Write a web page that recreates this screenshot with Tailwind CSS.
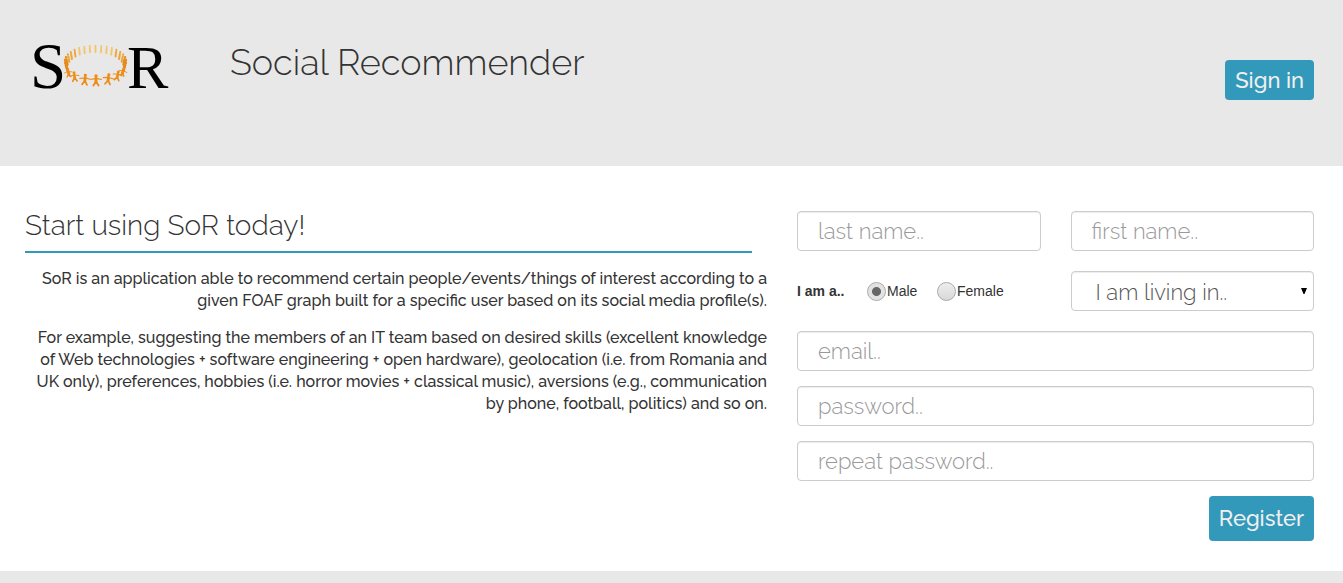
<!DOCTYPE html>
<html lang="en">
<head>
<meta charset="utf-8">
<meta name="viewport" content="width=device-width, initial-scale=1">
<title>Social Recommender</title>
<script src="https://cdn.jsdelivr.net/npm/@tailwindcss/browser@4"></script>
</head>
<body class="min-h-screen bg-[#e8e8e8] font-[Raleway,Lato,sans-serif] text-[#333]">
<header class="flex h-[166px] items-start pl-[25px] pr-[29px]">
  <a href="#" aria-label="SoR home" class="mt-5 block">
    <svg class="block h-[90px] w-[150px]" viewBox="25 20 150 90" role="img" aria-label="SoR">
      <defs>
        <g id="person" fill="currentColor" stroke="currentColor" stroke-linecap="round" stroke-linejoin="round">
          <circle cx="0" cy="-9.7" r="1.6" stroke="none"/>
          <path d="M0-7.3V-4" stroke-width="2.8"/>
          <path d="M-5.2-6.2L-1.2-7H1.2L5.2-6.2" fill="none" stroke-width="1.1"/>
          <path d="M0-4.2L-2.5-.4M0-4.2L2.5-.4" fill="none" stroke-width="1.8"/>
        </g>
        <path id="far" d="M0-6.8V-6.4M0-4.8V0" fill="none" stroke="currentColor" stroke-width="1.9" stroke-linecap="round"/>
      </defs>
      <g font-family="Liberation Serif" font-size="65" fill="#000"><text x="30" y="88">S</text><text x="127" y="88" font-size="62">R</text></g>
      <g id="ring"></g>
    </svg>
  </a>
  <h1 class="ml-[55px] mt-[38px] text-[36px] leading-[48px] font-light">Social Recommender</h1>
  <button type="button" class="ml-auto mt-[60px] h-10 rounded-[4px] bg-[#3399bb] px-[10px] text-[22px] leading-10 font-medium text-[#f0f0f0]">Sign in</button>
</header>
<main class="grid grid-cols-[742fr_517fr] gap-[30px] bg-white pt-[45px] pb-[30px] pl-[25px] pr-[29px]">
  <section>
    <h2 class="mr-[15px] h-[42px] border-b-2 border-[#3399bb] text-[28px] leading-[30px] font-light">Start using SoR today!</h2>
    <div class="mt-[15px] space-y-[15px] text-right text-[16px] leading-[22px] font-medium">
      <p>SoR is an application able to recommend certain people/events/things of interest according to a<br>given FOAF graph built for a specific user based on its social media profile(s).</p>
      <p>For example, suggesting the members of an IT team based on desired skills (excellent knowledge<br>of Web technologies + software engineering + open hardware), geolocation (i.e. from Romania and<br>UK only), preferences, hobbies (i.e. horror movies + classical music), aversions (e.g., communication<br>by phone, football, politics) and so on.</p>
    </div>
  </section>
  <form>
    <div class="grid grid-cols-2 gap-x-[30px] gap-y-5">
      <input type="text" aria-label="Last name" placeholder="last name.." class="h-10 w-full min-w-0 rounded-[4px] border border-[#ccc] bg-white px-5 text-[22px] font-light shadow-[inset_0_1px_1px_rgba(0,0,0,0.075)] placeholder:text-[#999]">
      <input type="text" aria-label="First name" placeholder="first name.." class="h-10 w-full min-w-0 rounded-[4px] border border-[#ccc] bg-white px-5 text-[22px] font-light shadow-[inset_0_1px_1px_rgba(0,0,0,0.075)] placeholder:text-[#999]">
      <fieldset class="flex h-10 items-center font-['Liberation_Sans',sans-serif] text-[14px]" aria-labelledby="gender">
        <span id="gender" class="w-[70px] font-bold">I am a..</span>
        <label class="flex w-[70px] items-center"><input type="radio" name="gender" checked class="mr-px size-[19px] shrink-0 appearance-none rounded-full border border-[#aaa] bg-linear-to-b from-[#eee] to-[#d8d8d8] checked:bg-[radial-gradient(circle,#666_0_4px,#e2e2e2_5px)]">Male</label>
        <label class="flex items-center"><input type="radio" name="gender" class="mr-px size-[19px] shrink-0 appearance-none rounded-full border border-[#aaa] bg-linear-to-b from-[#eee] to-[#d8d8d8] checked:bg-[radial-gradient(circle,#666_0_4px,#e2e2e2_5px)]">Female</label>
      </fieldset>
      <div class="relative">
        <select aria-label="Place of residence" class="block h-10 w-full appearance-none rounded-[4px] border border-[#ccc] bg-white px-6 pt-[2px] text-[22px] font-light text-[#555] shadow-[inset_0_1px_1px_rgba(0,0,0,0.075)]"><option>I am living in..</option></select>
        <svg class="pointer-events-none absolute top-[17px] right-[7px] h-[6px] w-[6px]" viewBox="0 0 6 6" aria-hidden="true"><path d="M0 0H6L3.5 6H2.5Z" fill="#000"/></svg>
      </div>
    </div>
    <div class="mt-5 flex flex-col gap-[15px]">
      <input type="email" aria-label="Email" placeholder="email.." class="h-10 w-full rounded-[4px] border border-[#ccc] bg-white px-5 text-[22px] font-light shadow-[inset_0_1px_1px_rgba(0,0,0,0.075)] placeholder:text-[#999]">
      <input type="password" aria-label="Password" placeholder="password.." class="h-10 w-full rounded-[4px] border border-[#ccc] bg-white px-5 text-[22px] font-light shadow-[inset_0_1px_1px_rgba(0,0,0,0.075)] placeholder:text-[#999]">
      <input type="password" aria-label="Repeat password" placeholder="repeat password.." class="h-10 w-full rounded-[4px] border border-[#ccc] bg-white px-5 text-[22px] font-light shadow-[inset_0_1px_1px_rgba(0,0,0,0.075)] placeholder:text-[#999]">
      <button type="submit" class="h-[45px] self-end rounded-[4px] bg-[#3399bb] px-[10px] text-[22px] font-medium text-[#f0f0f0]">Register</button>
    </div>
  </form>
</main>
<script>
// People standing in a ring: small and pale at the back, large and orange in front.
const ring = document.getElementById('ring');
const add = (shape, x, y, scale, color, lean = 0) => {
  const u = document.createElementNS('http://www.w3.org/2000/svg', 'use');
  u.setAttribute('href', '#' + shape);
  u.setAttribute('transform', `translate(${x} ${y}) rotate(${lean}) scale(${scale})`);
  u.setAttribute('color', color);
  ring.append(u);
};
for (let i = 0; i <= 20; i++) {
  const a = Math.PI * (1.12 - i * 1.24 / 20);
  const depth = (1 - Math.sin(a)) / 2;
  const edge = Math.abs(i - 10);
  const color = edge > 6 ? '#e58a1b' : edge > 3 ? '#eea53a' : '#f4c469';
  add('far', 95.5 + 28.5 * Math.cos(a), 68 - 16 * Math.sin(a), 0.95 + depth * 0.5, color, (i - 10) * 1.8);
}
[[69, 77, .75, -8], [75, 81.5, .9, -6], [84.5, 85, 1, 5], [96, 86, 1.05, 0], [107.5, 84.5, 1, 8], [116.5, 80.5, .9, 12], [122, 76, .75, 15]].forEach(([x, y, s, lean]) => add('person', x, y, s, '#ee8c18', lean));
</script>
</body>
</html>
